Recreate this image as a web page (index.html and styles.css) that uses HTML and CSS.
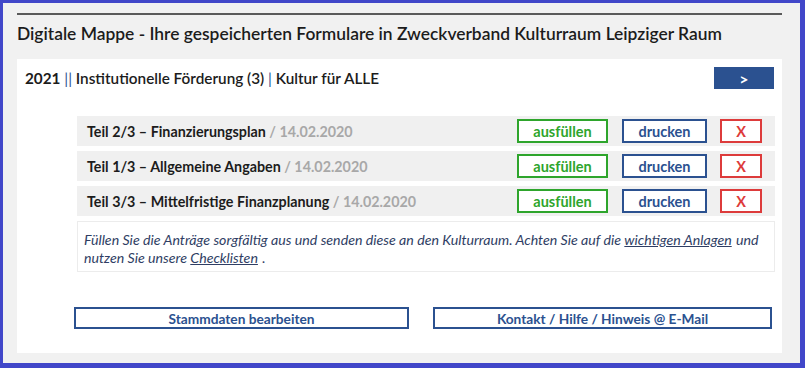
FILE: index.html
```html
<!DOCTYPE html>
<html lang="de">
<head>
    <meta charset="UTF-8">
    <meta name="viewport" content="width=device-width, initial-scale=1.0">
    <title>Digitale Mappe</title>
    <link rel="stylesheet" href="styles.css">
</head>
<body>
    <div class="page">
        <hr class="rule">
        <h1>Digitale Mappe - Ihre gespeicherten Formulare in Zweckverband Kulturraum Leipziger Raum</h1>

        <div class="panel">
            <div class="panel-head">
                <div class="crumbs">
                    <b>2021</b> <span class="sep">||</span> Institutionelle Förderung (3) <span class="sep">|</span> Kultur für ALLE
                </div>
                <button class="btn-go">&gt;</button>
            </div>

            <div class="forms">
                <div class="form-row">
                    <div class="form-name">Teil 2/3 – Finanzierungsplan <span class="date">/ 14.02.2020</span></div>
                    <button class="btn btn-fill">ausfüllen</button>
                    <button class="btn btn-print">drucken</button>
                    <button class="btn btn-del">X</button>
                </div>
                <div class="form-row">
                    <div class="form-name">Teil 1/3 – Allgemeine Angaben <span class="date">/ 14.02.2020</span></div>
                    <button class="btn btn-fill">ausfüllen</button>
                    <button class="btn btn-print">drucken</button>
                    <button class="btn btn-del">X</button>
                </div>
                <div class="form-row">
                    <div class="form-name">Teil 3/3 – Mittelfristige Finanzplanung <span class="date">/ 14.02.2020</span></div>
                    <button class="btn btn-fill">ausfüllen</button>
                    <button class="btn btn-print">drucken</button>
                    <button class="btn btn-del">X</button>
                </div>

                <div class="notice">
                    Füllen Sie die Anträge sorgfältig aus und senden diese an den Kulturraum. Achten Sie auf die <a href="#">wichtigen Anlagen</a> und
                    nutzen Sie unsere <a href="#">Checklisten</a> .
                </div>
            </div>

            <div class="actions">
                <button class="btn-wide btn-left">Stammdaten bearbeiten</button>
                <button class="btn-wide btn-right">Kontakt / Hilfe / Hinweis @ E-Mail</button>
            </div>
        </div>
    </div>
</body>
</html>
```

FILE: styles.css
```css
body {
    margin: 0;
    background: #4147c9;
    font-family: Lato, "Noto Sans", sans-serif;
    color: #1c1c1c;
}
.page {
    margin: 3px 5px 5px 3px;
    height: 360px;
    background: #f1f1f1;
    padding: 10px 18px 0 14px;
    box-sizing: border-box;
}
.rule {
    margin: 0;
    border: 0;
    border-top: 2px solid #5a5a5a;
}
h1 {
    margin: 0;
    height: 44px;
    line-height: 38px;
    font-size: 17.4px;
    font-weight: 600;
}
.panel {
    background: #fff;
    height: 294px;
    padding: 8px 8px 0 8px;
    box-sizing: border-box;
}
.panel-head {
    display: flex;
    justify-content: space-between;
    align-items: center;
    height: 22px;
}
.crumbs {
    font-size: 15.3px;
    font-weight: 600;
}
.crumbs b {
    font-weight: 700;
}
.sep {
    color: #2b5190;
    font-weight: 400;
}
.btn-go {
    width: 60px;
    height: 22px;
    border: 0;
    background: #2b5190;
    color: #fff;
    font: 700 16px Lato, sans-serif;
}
.forms {
    margin: 27px -1px 0 52px;
    display: flex;
    flex-direction: column;
    gap: 5px;
}
.form-row {
    display: flex;
    align-items: center;
    height: 30px;
    background: #f0f0f0;
    padding: 0 13px 0 10px;
}
.form-name {
    flex: 1;
    font-size: 14.3px;
    font-weight: 700;
}
.date {
    color: #a8a8a8;
}
.btn {
    height: 24px;
    background: #fff;
    border: 2px solid;
    font: 700 14.5px Lato, sans-serif;
    padding: 0;
}
.btn-fill {
    width: 91px;
    border-color: #2ea52c;
    color: #2ea52c;
}
.btn-print {
    width: 85px;
    margin-left: 14px;
    border-color: #2b5190;
    color: #2b5190;
}
.btn-del {
    width: 42px;
    margin-left: 13px;
    border-color: #dd3b3b;
    color: #dd3b3b;
}
.notice {
    border: 1px solid #ececec;
    padding: 9px 6px 4px 6px;
    font-size: 14.2px;
    line-height: 18px;
    font-style: italic;
    color: #2f3e64;
}
.notice a {
    color: #2f3e64;
    padding-right: 1px;
}
.actions {
    display: flex;
    gap: 24px;
    margin: 35px 2px 0 49px;
}
.btn-wide {
    height: 22px;
    background: #fff;
    border: 2px solid #2b5190;
    color: #2b5190;
    font: 700 13.7px Lato, sans-serif;
}
.btn-left {
    width: 335px;
}
.btn-right {
    width: 339px;
}
```
